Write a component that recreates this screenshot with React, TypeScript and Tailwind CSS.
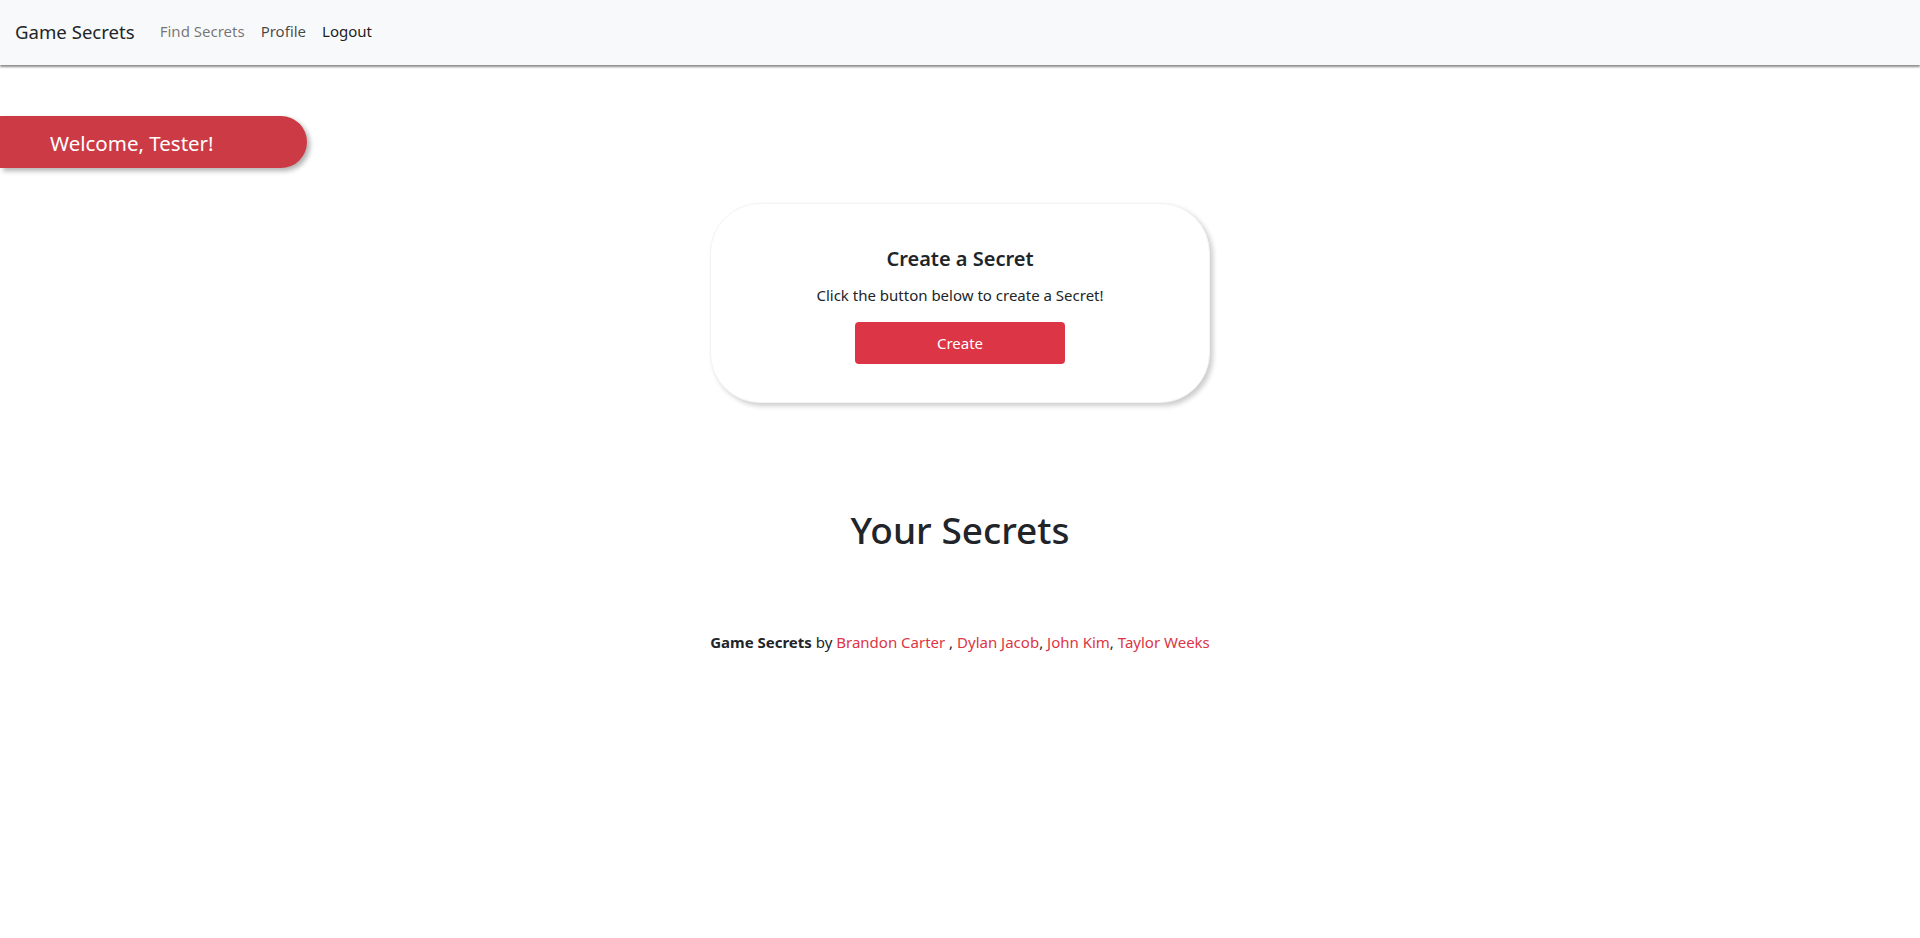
export default function App() {
  return (
    <div className="min-h-screen bg-white text-[#212529] font-['Noto_Sans',sans-serif]">
      {/* Navbar */}
      <nav className="h-[65px] bg-[#f8f9fa] shadow-[0_2px_2px_rgba(0,0,0,0.45)] flex items-center px-[15px] pb-[2px]">
        <a className="text-[18.6px] text-[#212529] mr-[25px]">Game Secrets</a>
        <div className="flex items-center gap-[16px] text-[15px]">
          <a className="text-[rgba(0,0,0,0.55)]">Find Secrets</a>
          <a className="text-[rgba(0,0,0,0.72)]">Profile</a>
          <a className="text-[rgba(0,0,0,0.9)]">Logout</a>
        </div>
      </nav>

      {/* Welcome pill */}
      <div className="mt-[51px] w-[307px] h-[52px] bg-[#cc3b45] rounded-r-full shadow-[3px_3px_5px_rgba(0,0,0,0.3)] flex items-center pl-[50px] pt-[3px]">
        <span className="text-white text-[20.5px]">Welcome, Tester!</span>
      </div>

      {/* Create card */}
      <div className="flex justify-center mt-[35px]">
        <div className="w-[500px] h-[200px] bg-white rounded-[50px] border border-[#f3f3f3] shadow-[3px_3px_5px_rgba(0,0,0,0.2)] flex flex-col items-center pt-[40px]">
          <h2 className="text-[20px] font-semibold leading-[30px]">Create a Secret</h2>
          <p className="text-[15px] mt-[10px] leading-[22px]">Click the button below to create a Secret!</p>
          <button className="mt-[16px] w-[210px] h-[42px] bg-[#dc3545] text-white text-[15px] rounded-[4px]">
            Create
          </button>
        </div>
      </div>

      {/* Your secrets */}
      <h1 className="text-center text-[37px] font-medium mt-[103px] leading-[48px]">Your Secrets</h1>

      {/* Footer */}
      <p className="text-center text-[15px] mt-[77px]">
        <b className="font-bold">Game Secrets</b> by{' '}
        <a className="text-[#dc3545]">Brandon Carter</a> ,{' '}
        <a className="text-[#dc3545]">Dylan Jacob</a>,{' '}
        <a className="text-[#dc3545]">John Kim</a>,{' '}
        <a className="text-[#dc3545]">Taylor Weeks</a>
      </p>
    </div>
  );
}
